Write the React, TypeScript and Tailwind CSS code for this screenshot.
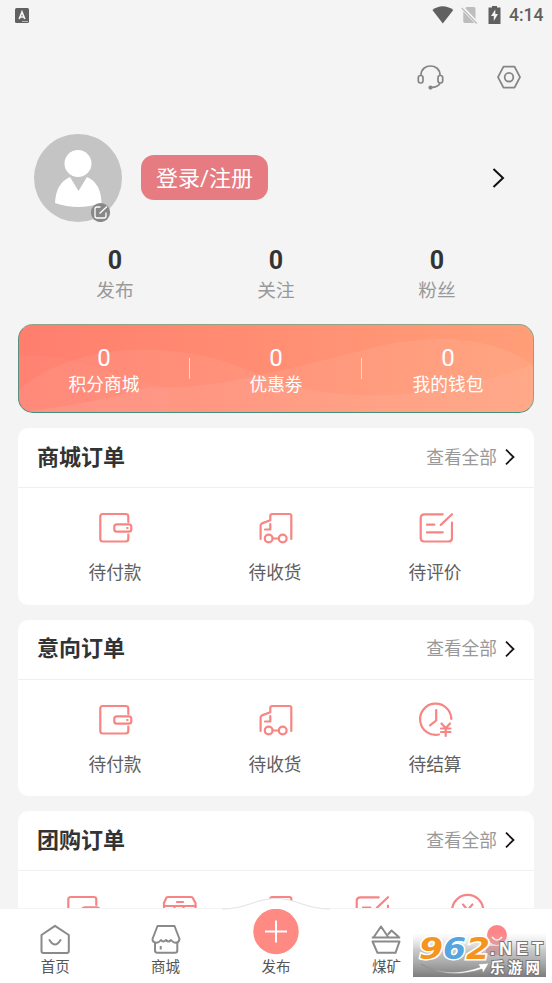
import type { ReactNode } from 'react'

type IconName = 'wallet' | 'truck' | 'review' | 'settle' | 'box' | 'refund'

const stats = [
  { label: '发布', value: 0 },
  { label: '关注', value: 0 },
  { label: '粉丝', value: 0 },
]

const assets = [
  { label: '积分商城', value: 0 },
  { label: '优惠劵', value: 0 },
  { label: '我的钱包', value: 0 },
]

const orderIcons: Record<IconName, ReactNode> = {
  wallet: (
    <>
      <path d="M31.3 12V6.5Q31.3 4 28.8 4H5.8Q3.3 4 3.3 6.5V29Q3.3 31.5 5.8 31.5H28.8Q31.3 31.5 31.3 29V24.5" />
      <rect x="17.3" y="14.3" width="17" height="7.4" rx="2.5" />
      <path d="M30.2 18h.4" />
    </>
  ),
  truck: (
    <>
      <path d="M3.6 29V15.5Q3.6 14 5 13.4L13.3 10.3V6Q13.3 4 15.3 4H32.3Q34.3 4 34.3 6V29" />
      <path d="M13.3 14V19.5H8" />
      <circle cx="11.7" cy="28.5" r="3.9" />
      <circle cx="25.7" cy="28.5" r="3.9" />
      <path d="M15.6 28.5H21.8" />
    </>
  ),
  review: (
    <>
      <path d="M25.7 4.3H7.5Q3.7 4.3 3.7 8V28Q3.7 31.5 7.5 31.5H31.5Q35 31.5 35 28V12.7" />
      <path d="M35 4.2L23.8 14.9" />
      <path d="M10 14.7H17.3M10 22.4H25.7" />
    </>
  ),
  settle: (
    <>
      <path d="M34.3 17A15.6 15.6 0 1 0 22 32.5" />
      <path d="M19.2 8V18.5L13 23.3" />
      <path d="M24.5 21.5L28.7 26.3L33 21.5M24 26.5H33.5M24 30H33.5M28.7 26.5V34" />
    </>
  ),
  box: (
    <>
      <path d="M3 14V10L5.5 4.5Q6 4 7 4H30Q31 4 31.5 4.5L34.5 10V30H3V14" />
      <path d="M3 13H34.5M16 9H22M13.5 13V20M22.5 13V20" />
    </>
  ),
  refund: (
    <>
      <circle cx="18.7" cy="17.5" r="15.6" />
      <path d="M14 11.5L18.7 17L23.4 11.5M18.7 17V26M13 18H24.4" />
    </>
  ),
}

const sections: { title: string; items: { label: string; icon: IconName }[] }[] = [
  {
    title: '商城订单',
    items: [
      { label: '待付款', icon: 'wallet' },
      { label: '待收货', icon: 'truck' },
      { label: '待评价', icon: 'review' },
    ],
  },
  {
    title: '意向订单',
    items: [
      { label: '待付款', icon: 'wallet' },
      { label: '待收货', icon: 'truck' },
      { label: '待结算', icon: 'settle' },
    ],
  },
  {
    title: '团购订单',
    items: [
      { label: '', icon: 'wallet' },
      { label: '', icon: 'box' },
      { label: '', icon: 'truck' },
      { label: '', icon: 'review' },
      { label: '', icon: 'refund' },
    ],
  },
]

function StatusBar() {
  return (
    <div className="flex h-[30px] shrink-0 items-center justify-between pr-[9px] pl-[15px]">
      <svg width="14" height="15" viewBox="0 0 14 15" aria-hidden>
        <rect width="14" height="15" rx="1.5" fill="#606060" />
        <path d="M4.2 11L7 4L9.8 11M5 9H9" fill="none" stroke="#f4f4f4" strokeWidth="1.7" />
        <path d="M7 13.5H13" stroke="#b8b8b8" />
      </svg>
      <div className="flex items-center">
        <svg width="22" height="18" viewBox="0 0 22 18" aria-hidden>
          <path d="M.4 4Q10.7 -3.5 21.3 4L10.8 17.5Z" fill="#606060" />
        </svg>
        <svg className="ml-[7px]" width="17" height="18" viewBox="0 0 17 18" aria-hidden>
          <path d="M5.5 1H13Q14.500 1 14.5 2.500V13L4.300 2.300ZM2.3 5.500L13.500 17H4Q2.300 17 2.3 15.500Z" fill="#bdbdbd" />
          <path d="M.7 2L15.8 17.500" stroke="#bdbdbd" strokeWidth="1.3" />
        </svg>
        <svg className="ml-[10px]" width="13" height="18" viewBox="0 0 13 18" aria-hidden>
          <path d="M4 0H9V1.5H12.5V18H.5V1.5H4Z" fill="#606060" />
          <path d="M7.3 3.5L3 10H5.8V15L10 8H7.3Z" fill="#f4f4f4" />
        </svg>
        <span className="ml-2 w-[34px] font-[Roboto,sans-serif] text-[17.5px] leading-[18px] font-medium whitespace-nowrap text-[#606060]">
          4:14
        </span>
      </div>
    </div>
  )
}

function HeaderActions() {
  return (
    <div className="flex h-[94px] shrink-0 items-center justify-end gap-[50px] pr-[30px]">
      <svg width="30" height="30" viewBox="0 0 30 30" fill="none" stroke="#858585" strokeWidth="1.7" aria-hidden>
        <path d="M5 13.5V12.5C5 .5 24 .5 24 12.5V13.5" transform="translate(0 .5)" />
        <rect x="2.3" y="13.5" width="4.7" height="7.5" rx="2.2" />
        <rect x="22" y="13.5" width="4.7" height="7.5" rx="2.2" />
        <path d="M24 21Q23 25 14.7 25.6" />
        <circle cx="14.5" cy="25.6" r="1.3" fill="#858585" />
      </svg>
      <svg width="26" height="26" viewBox="0 0 26 26" fill="none" stroke="#858585" strokeWidth="1.8" aria-hidden>
        <path d="M7.5 2.7H18.5L24 13.2L18.500 23.7H7.5L2 13.2Z" strokeLinejoin="round" />
        <circle cx="13" cy="13.2" r="4.3" />
      </svg>
    </div>
  )
}

function Profile() {
  return (
    <div className="flex h-[108px] shrink-0 items-center pr-[46px] pl-[34px]">
      <svg width="88" height="88" viewBox="0 0 88 88" aria-hidden>
        <circle cx="44" cy="44" r="44" fill="#c4c4c4" />
        <circle cx="44" cy="29.5" r="13.5" fill="#fff" />
        <path d="M21 69Q22 49 36 43L44.5 57L53 43Q67 49 67.5 69Q44 77 21 69Z" fill="#fff" />
        <circle cx="66.5" cy="78.5" r="9.6" fill="#888" />
        <path
          d="M66.5 73H63Q61 73 61 75V82Q61 84 63 84H70Q72 84 72 82V78.5M65.5 79.5L73 72.5"
          fill="none"
          stroke="#fff"
          strokeWidth="1.3"
        />
      </svg>
      <button className="-mt-px ml-[19px] h-[45px] w-[127px] rounded-[13px] bg-[#e67c81] text-[22px] leading-[47px] text-white">
        登录/注册
      </button>
      <svg className="ml-auto" width="14" height="22" viewBox="0 0 14 22" fill="none" stroke="#111" strokeWidth="2" aria-hidden>
        <path d="M1.5 2L11 11L1.5 20" />
      </svg>
    </div>
  )
}

function AssetBanner() {
  return (
    <div className="relative mx-[18px] h-[89px] shrink-0 overflow-hidden rounded-[15px] border border-t-[#8fa588] border-r-[#7fa98a] border-b-[#45907c] border-l-[#5b8f80] bg-linear-to-r from-[#ff7e6e] to-[#ff9e78]">
      <svg className="absolute inset-0" width="514" height="87" viewBox="0 0 514 87" aria-hidden>
        <path d="M0 31Q30 29 55 36Q100 50 150 63V87H0Z" fill="#fff" opacity=".03" />
        <path d="M0 65C50 20 150 10 236 48C330 85 420 72 514 40V87H0Z" fill="#fff" opacity=".06" />
        <path d="M130 62C200 66 290 38 345 25C420 4 480 15 514 40V87H0Q80 78 130 62Z" fill="#fff" opacity=".07" />
      </svg>
      <div className="relative -mx-px grid h-full grid-cols-3">
        {assets.map((asset, i) => (
          <div key={asset.label} className="relative flex flex-col items-center pt-[19px] text-white">
            <span className="font-[Roboto,sans-serif] text-2xl leading-7">{asset.value}</span>
            <span className="mt-px text-[17.7px] leading-6">{asset.label}</span>
            {i < 2 && <i className="absolute top-[33px] right-0 h-[21px] w-px bg-white/60" />}
          </div>
        ))}
      </div>
    </div>
  )
}

function OrderCard({ title, items }: (typeof sections)[number]) {
  return (
    <section className="h-[176.5px] shrink-0 overflow-hidden rounded-[10px] bg-white">
      <header className="flex h-[60px] items-center justify-between border-b border-[#f0f0f0] px-[19px]">
        <h2 className="text-[22px] leading-8 font-bold text-[#333]">{title}</h2>
        <div className="flex items-center gap-2 text-[17.7px] leading-6 text-[#999]">
          查看全部
          <svg className="-mt-px" width="10" height="16" viewBox="0 0 10 16" fill="none" stroke="#151515" strokeWidth="1.8" aria-hidden>
            <path d="M1 .7L8.5 8L1 15.3" />
          </svg>
        </div>
      </header>
      <div className="flex pt-[22px] pr-[19px] pl-[17px]">
        {items.map((item) => (
          <div key={item.icon} className="flex flex-1 flex-col items-center">
            <svg
              className="-ml-px"
              width="36"
              height="36"
              viewBox="0 0 36 36"
              fill="none"
              stroke="#f68584"
              strokeWidth="2.2"
              strokeLinecap="round"
              strokeLinejoin="round"
              aria-hidden
            >
              {orderIcons[item.icon]}
            </svg>
            <span className="mt-[15px] text-[17.7px] leading-6 text-[#606060]">{item.label}</span>
          </div>
        ))}
      </div>
    </section>
  )
}

function Tab({ label, children }: { label: string; children: ReactNode }) {
  return (
    <div className="flex flex-1 flex-col items-center pt-[15px]">
      <svg
        width="30"
        height="30"
        viewBox="0 0 30 30"
        fill="none"
        stroke="#8a8a8a"
        strokeWidth="2"
        strokeLinejoin="round"
        aria-hidden
      >
        {children}
      </svg>
      <span className="mt-[3px] text-[14.5px] leading-[22px] text-[#555]">{label}</span>
    </div>
  )
}

function TabBar() {
  return (
    <nav className="relative flex h-[75px] shrink-0 border-t border-[#f3f3f3] bg-white">
      <svg className="absolute -top-[12px] left-[222px]" width="108" height="15" viewBox="0 0 108 15" aria-hidden>
        <path d="M0 12C24 12 34 1.5 54 1.5S84 12 108 12V15H0Z" fill="#fff" />
        <path d="M0 12C24 12 34 1.5 54 1.5S84 12 108 12" fill="none" stroke="#e2e2e2" />
      </svg>
      <Tab label="首页">
        <path d="M15 1.8L28.8 11V27Q28.8 29 26.800 29H3.500Q1.500 29 1.500 27V11Z" />
        <path d="M9.5 16Q15 25 20.5 16" strokeLinecap="round" />
      </Tab>
      <Tab label="商城">
        <path d="M6.500 2H23.500L28.5 15Q28 18.800 24.500 18.800Q22 18.500 20 16Q17.500 19 15 16Q12 19 10 16Q8 18.500 5.500 18.800Q1.500 18.500 1.500 15Z" />
        <path d="M4 19V26.500Q4 28.800 6.500 28.800H24Q26.300 28.800 26.300 26.500V19M9.7 22V25.500" />
      </Tab>
      <div className="relative flex flex-1 flex-col items-center">
        <svg width="46" height="46" viewBox="0 0 46 46" aria-hidden>
          <circle cx="23" cy="22.5" r="22.7" fill="#ff8983" />
          <path d="M12 22.500H34M23 11.500V33.500" stroke="#fff" strokeWidth="2" />
        </svg>
        <span className="mt-0.5 text-[14.5px] leading-[22px] text-[#555]">发布</span>
      </div>
      <Tab label="煤矿">
        <path d="M3 12.700L10 2.500L17 12.700M17 10.500L20.500 6.500L27.500 12.700M.8 13.500H29.200M1.500 17.500H28.500L24.500 28.800H6.500Z" />
      </Tab>
      <div className="flex flex-1 flex-col items-center pt-4">
        <svg width="22" height="30" viewBox="0 0 22 30" aria-hidden>
          <circle cx="11" cy="10" r="10" fill="#ff8488" />
          <path d="M6 12Q11 18 16 12" fill="none" stroke="#fff" strokeWidth="1.5" />
          <path d="M0 30V25Q0 21 5 21H17Q22 21 22 25V30Z" fill="#ff8488" />
        </svg>
      </div>
      <Watermark />
    </nav>
  )
}

function Watermark() {
  return (
    <svg
      className="absolute top-[24px] left-[413px] overflow-visible"
      width="133"
      height="44"
      viewBox="0 0 133 44"
      role="img"
      aria-label="962.NET 乐游网"
    >
      <defs>
        <linearGradient id="shade" x2="0" y2="1">
          <stop stopColor="#ccc" stopOpacity="0" />
          <stop offset=".4" stopColor="#aaa" stopOpacity=".65" />
          <stop offset="1" stopColor="#777" stopOpacity=".96" />
        </linearGradient>
      </defs>
      <rect width="133" height="44" fill="url(#shade)" />
      <g
        fontFamily="DejaVu Sans, sans-serif"
        fontWeight="700"
        fontStyle="italic"
        fontSize="30"
        stroke="#fff"
        strokeWidth="3"
        paintOrder="stroke"
      >
        <text x="6" y="26" textLength="24" lengthAdjust="spacingAndGlyphs" fill="#f7941d">9</text>
        <text x="30" y="26" textLength="23" lengthAdjust="spacingAndGlyphs" fill="#55a6de">6</text>
        <text x="53" y="26" textLength="24" lengthAdjust="spacingAndGlyphs" fill="#f7941d">2</text>
      </g>
      <path d="M8 31Q34 46 67 34L65 31L76 30L70 40L69 36Q35 47 8 31Z" fill="#fff" stroke="#888" strokeWidth=".5" />
      <g fill="#fff" stroke="#777" strokeWidth="2" paintOrder="stroke" fontWeight="700">
        <text x="77" y="22" fontFamily="Liberation Sans, sans-serif" fontSize="18" textLength="53">.NET</text>
        <text x="77" y="40" fontFamily="Noto Sans CJK SC, sans-serif" fontSize="14.5" textLength="50">乐游网</text>
      </g>
    </svg>
  )
}

export default function App() {
  return (
    <div className="flex h-[983px] w-[552px] flex-col overflow-hidden bg-[#f4f4f4] font-['Roboto','Noto_Sans_CJK_SC',sans-serif]">
      <main className="flex min-h-0 flex-1 flex-col overflow-hidden">
        <StatusBar />
        <HeaderActions />
        <Profile />
        <div className="grid h-[92px] shrink-0 grid-cols-3 px-[34.5px] pt-[14px]">
          {stats.map((stat) => (
            <div key={stat.label} className="flex flex-col items-center">
              <span className="text-[25px] leading-[30px] font-bold text-[#333]">{stat.value}</span>
              <span className="text-[18.7px] leading-[30px] text-[#999]">{stat.label}</span>
            </div>
          ))}
        </div>
        <AssetBanner />
        <div className="mt-[15px] flex flex-col gap-[15px] px-[18px]">
          {sections.map((section) => (
            <OrderCard key={section.title} {...section} />
          ))}
        </div>
      </main>
      <TabBar />
    </div>
  )
}
